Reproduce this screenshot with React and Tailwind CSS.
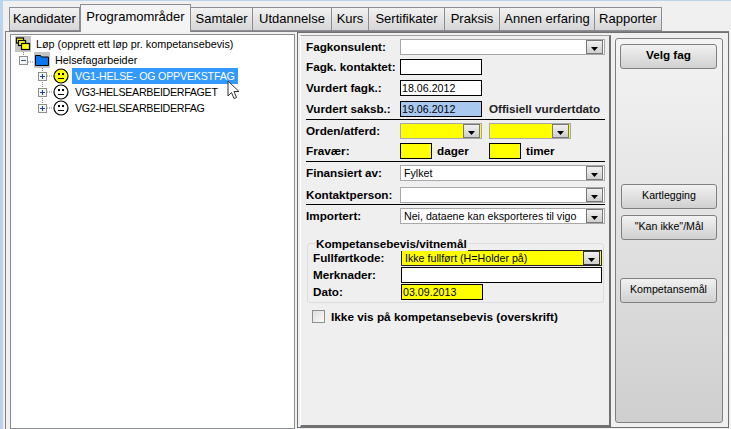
import React from 'react'

const tabs = [
  { label: 'Kandidater', w: 'w-[71px]' },
  { label: 'Programområder', w: 'w-[111px]', active: true },
  { label: 'Samtaler', w: 'w-[63px]' },
  { label: 'Utdannelse', w: 'w-[80px]' },
  { label: 'Kurs', w: 'w-[38px]' },
  { label: 'Sertifikater', w: 'w-[77px]' },
  { label: 'Praksis', w: 'w-[56px]' },
  { label: 'Annen erfaring', w: 'w-[96px]' },
  { label: 'Rapporter', w: 'w-[68px]' },
]

const Tab = ({ label, w, active }) =>
  active ? (
    <div className={`${w} h-[28px] -mb-px z-10 border border-b-0 border-[#8a8d94] bg-[#f4f4f4] text-center text-[13px] leading-[23px]`}>
      {label}
    </div>
  ) : (
    <div className={`${w} h-[24px] -ml-px border border-[#8a8d94] bg-gradient-to-b from-[#f2f2f2] to-[#d6d6d6] text-center text-[13px] leading-[21px]`}>
      {label}
    </div>
  )

const Smiley = ({ color }) => (
  <svg width="16" height="16" viewBox="0 0 16 16" className="shrink-0">
    <circle cx="8" cy="8" r="7" fill={color} stroke="#000" strokeWidth="1.2" />
    <rect x="5" y="5" width="2" height="2" fill="#000" />
    <rect x="9" y="5" width="2" height="2" fill="#000" />
    <rect x="5" y="10" width="6" height="1" fill="#000" />
  </svg>
)

const Expander = ({ minus }) => (
  <svg width="9" height="9" viewBox="0 0 9 9" className="shrink-0">
    <rect x="0.5" y="0.5" width="8" height="8" fill="#f4f4f4" stroke="#8e8f8f" />
    <rect x="2" y="4" width="5" height="1" fill={minus ? '#3a5a80' : '#1f3f9a'} />
    {!minus && <rect x="4" y="2" width="1" height="5" fill="#1f3f9a" />}
  </svg>
)

const Tree = () => (
  <div className="w-[285px] shrink-0 border border-[#8a8d94] bg-white text-[10.67px] leading-4">
    <div className="relative ml-[4px] mt-px">
      {/* dotted connectors */}
      <svg width="60" height="80" className="absolute left-0 top-0">
        <path d="M8.5 16V22 M13 26H19 M27.5 32V72 M28 40H38 M28 56H38 M28 72H38" stroke="#808080" strokeDasharray="1 1" fill="none" />
      </svg>
      <div className="relative flex h-4 items-center">
        <svg width="16" height="16" viewBox="0 0 16 16" className="shrink-0 bg-[#c4c4c4]">
          <g stroke="#000" strokeWidth="1.2" fill="#ffff00">
            <rect x="1.5" y="2" width="7" height="5" />
            <rect x="3.5" y="4.5" width="7" height="5" />
            <rect x="6.5" y="7.5" width="8" height="6" />
          </g>
        </svg>
        <span className="ml-[5px] text-[10.8px]">Løp (opprett ett løp pr. kompetansebevis)</span>
      </div>
      <div className="relative flex h-4 items-center">
        <div className="ml-[4px]"><Expander minus /></div>
        <svg width="16" height="16" viewBox="0 0 16 16" className="ml-[6px] shrink-0 bg-[#c4c4c4]">
          <path d="M1.5 13.5V3.5H6.5L7.5 5H14.5V13.5Z" fill="#0a78f0" stroke="#000" />
        </svg>
        <span className="ml-[5px] text-[10.8px]">Helsefagarbeider</span>
      </div>
      <div className="relative flex h-4 items-center">
        <div className="ml-[23px]"><Expander /></div>
        <div className="ml-[6px]"><Smiley color="#ffff00" /></div>
        <span className="ml-[3px] bg-[#3399ff] px-[3px] tracking-[-0.2px] text-white">VG1-HELSE- OG OPPVEKSTFAG</span>
      </div>
      <div className="relative flex h-4 items-center">
        <div className="ml-[23px]"><Expander /></div>
        <div className="ml-[6px]"><Smiley color="#ffffff" /></div>
        <span className="ml-[6px] tracking-[-0.3px]">VG3-HELSEARBEIDERFAGET</span>
      </div>
      <div className="relative flex h-4 items-center">
        <div className="ml-[23px]"><Expander /></div>
        <div className="ml-[6px]"><Smiley color="#ffffff" /></div>
        <span className="ml-[6px] tracking-[-0.3px]">VG2-HELSEARBEIDERFAG</span>
      </div>
      {/* mouse pointer */}
      <svg width="14" height="21" viewBox="0 0 14 21" className="absolute left-[212px] top-[44px]">
        <path d="M1 1V16L4.5 12.5L7 18.5L9.5 17.5L7 11.5H12Z" fill="#fff" stroke="#333" strokeLinejoin="round" />
      </svg>
    </div>
  </div>
)

const ArrowButton = ({ dark }) => (
  <div className={`flex w-[17px] shrink-0 items-center justify-center self-stretch border bg-gradient-to-b from-[#f0f0f0] to-[#cfcfcf] ${dark ? 'border-[#333]' : 'border-[#777]'}`}>
    <svg width="7" height="4" viewBox="0 0 7 4" className="mt-[4px]"><path d="M0 0H7L3.5 4Z" fill="#000" /></svg>
  </div>
)

const Combo = ({ value, className = '', yellow, dark }) => (
  <div className={`flex h-4 items-stretch border pl-[2px] pr-px ${dark ? 'border-[#222]' : 'border-[#a8a8a8]'} ${yellow ? 'bg-[#ffff00]' : 'bg-white'} ${className}`}>
    <span className="flex-1 truncate pl-[1px] text-[10.67px] leading-[14px]">{value}</span>
    <ArrowButton dark={dark} />
  </div>
)

const Input = ({ value, className = '' }) => (
  <div className={`h-4 border border-black px-px text-[10.67px] leading-[14px] ${className}`}>{value}</div>
)

const Row = ({ label, children, className = '' }) => (
  <div className={`flex h-4 items-center ${className}`}>
    <span className="w-[94px] shrink-0 text-[11.7px] font-bold leading-4">{label}</span>
    {children}
  </div>
)

const Divider = ({ className = '' }) => <div className={`h-px bg-black ${className}`} />

const Form = () => (
  <div className="w-[311px] border-b-2 border-l border-r-2 border-t border-b-[#707070] border-l-white border-r-[#707070] border-t-[#a0a0a0] bg-[#efefef] pl-[5px] pt-[3px]">
    <Row label="Fagkonsulent:"><Combo value="" className="w-[205px]" /></Row>
    <Row label="Fagk. kontaktet:" className="mt-[4px]"><Input value="" className="w-[82px] bg-white" /></Row>
    <Row label="Vurdert fagk.:" className="mt-[5px]"><Input value="18.06.2012" className="w-[82px] bg-white" /></Row>
    <Row label="Vurdert saksb.:" className="mt-[5px]">
      <Input value="19.06.2012" className="w-[82px] bg-[#a8c8f0]" />
      <span className="ml-[7px] text-[11.7px] font-bold leading-4 text-[#222]">Offisiell vurdertdato</span>
    </Row>
    <Divider className="mt-[2px] w-[299px]" />
    <Row label="Orden/atferd:" className="mt-[3px]">
      <Combo value="" yellow className="w-[82px]" />
      <Combo value="" yellow className="ml-[7px] w-[82px]" />
    </Row>
    <Row label="Fravær:" className="mt-[4px]">
      <Input value="" className="w-[32px] bg-[#ffff00]" />
      <span className="ml-[5px] w-[52px] text-[11.7px] font-bold leading-4">dager</span>
      <Input value="" className="w-[32px] bg-[#ffff00]" />
      <span className="ml-[5px] text-[11.7px] font-bold leading-4">timer</span>
    </Row>
    <Divider className="mt-[2px] w-[299px]" />
    <Row label="Finansiert av:" className="mt-[3px]"><Combo value="Fylket" className="w-[205px]" /></Row>
    <Row label="Kontaktperson:" className="mt-[6px]"><Combo value="" className="w-[205px]" /></Row>
    <Divider className="mt-[1px] w-[299px]" />
    <Row label="Importert:" className="mt-[3px]"><Combo value="Nei, dataene kan eksporteres til vigo" className="w-[205px]" /></Row>

    <div className="relative ml-[1px] mt-[19px] h-[60px] w-[297px] rounded-[3px] border border-[#dcdcdc] pl-[5px] pt-[6px]">
      <span className="absolute left-[7px] -top-[7px] bg-[#efefef] px-px text-[11.7px] font-bold leading-[14px]">Kompetansebevis/vitnemål</span>
      <div className="flex h-4 items-center">
        <span className="w-[88px] shrink-0 text-[11.7px] font-bold leading-4">Fullførtkode:</span>
        <Combo value="Ikke fullført (H=Holder på)" yellow dark className="w-[201px]" />
      </div>
      <div className="mt-[1px] flex h-4 items-center">
        <span className="w-[88px] shrink-0 text-[11.7px] font-bold leading-4">Merknader:</span>
        <Input value="" className="w-[201px] bg-white" />
      </div>
      <div className="mt-[1px] flex h-4 items-center">
        <span className="w-[88px] shrink-0 text-[11.7px] font-bold leading-4">Dato:</span>
        <Input value="03.09.2013" className="w-[82px] bg-[#ffff00]" />
      </div>
    </div>

    <div className="ml-[6px] mt-[7px] flex h-[13px] items-center">
      <div className="h-[13px] w-[13px] border border-[#8e8f8f] bg-gradient-to-br from-[#dedede] to-[#fafafa]" />
      <span className="ml-[6px] text-[11.8px] font-bold leading-4">Ikke vis på kompetansebevis (overskrift)</span>
    </div>
  </div>
)

const Btn = ({ label, bold, className = '' }) => (
  <div className={`flex h-[25px] items-center justify-center rounded-[3px] border border-[#808080] bg-gradient-to-b from-[#f2f2f2] to-[#d0d0d0] pb-[3px] ${bold ? 'text-[11.7px] font-bold' : 'text-[10.67px]'} ${className}`}>
    {label}
  </div>
)

const Side = () => (
  <div className="ml-[4px] mt-[5px] mb-[4px] flex w-[108px] shrink-0 flex-col rounded-[3px] border border-[#808080] bg-gradient-to-b from-[#f4f4f4] to-[#cfcfcf] pl-[4px] pt-[5px]">
    <Btn label="Velg fag" bold className="w-[97px]" />
    <Btn label="Kartlegging" className="mt-[115px] ml-px w-[96px]" />
    <Btn label={'"Kan ikke"/Mål'} className="mt-[6px] ml-px w-[96px]" />
    <Btn label="Kompetansemål" className="mt-[38px] w-[97px]" />
  </div>
)

export default function App() {
  return (
    <div className="flex h-[429px] w-[731px] overflow-hidden bg-[#f0f0f0] font-['Liberation_Sans',Arial,sans-serif] text-black">
      <div className="w-[3px] shrink-0 bg-[#b9d4ee]" />
      <div className="flex-1 pl-[2px] pr-[2px]">
        <div className="h-px -ml-[5px] -mr-[2px] bg-[#b9d4ee]" />
        <div className="flex h-[30px] items-end pl-[5px] pt-[3px]">
          {tabs.map((t) => <Tab key={t.label} {...t} />)}
        </div>
        <div className="flex h-[398px] border-l border-t border-[#808080] pl-[4px] pt-[2px]">
          <Tree />
          <div className="-mt-[2px] ml-[2px] mb-px flex w-[432px] border border-[#707070] pl-[2px]">
            <div className="flex pt-[2px]"><Form /></div>
            <Side />
          </div>
        </div>
      </div>
    </div>
  )
}
